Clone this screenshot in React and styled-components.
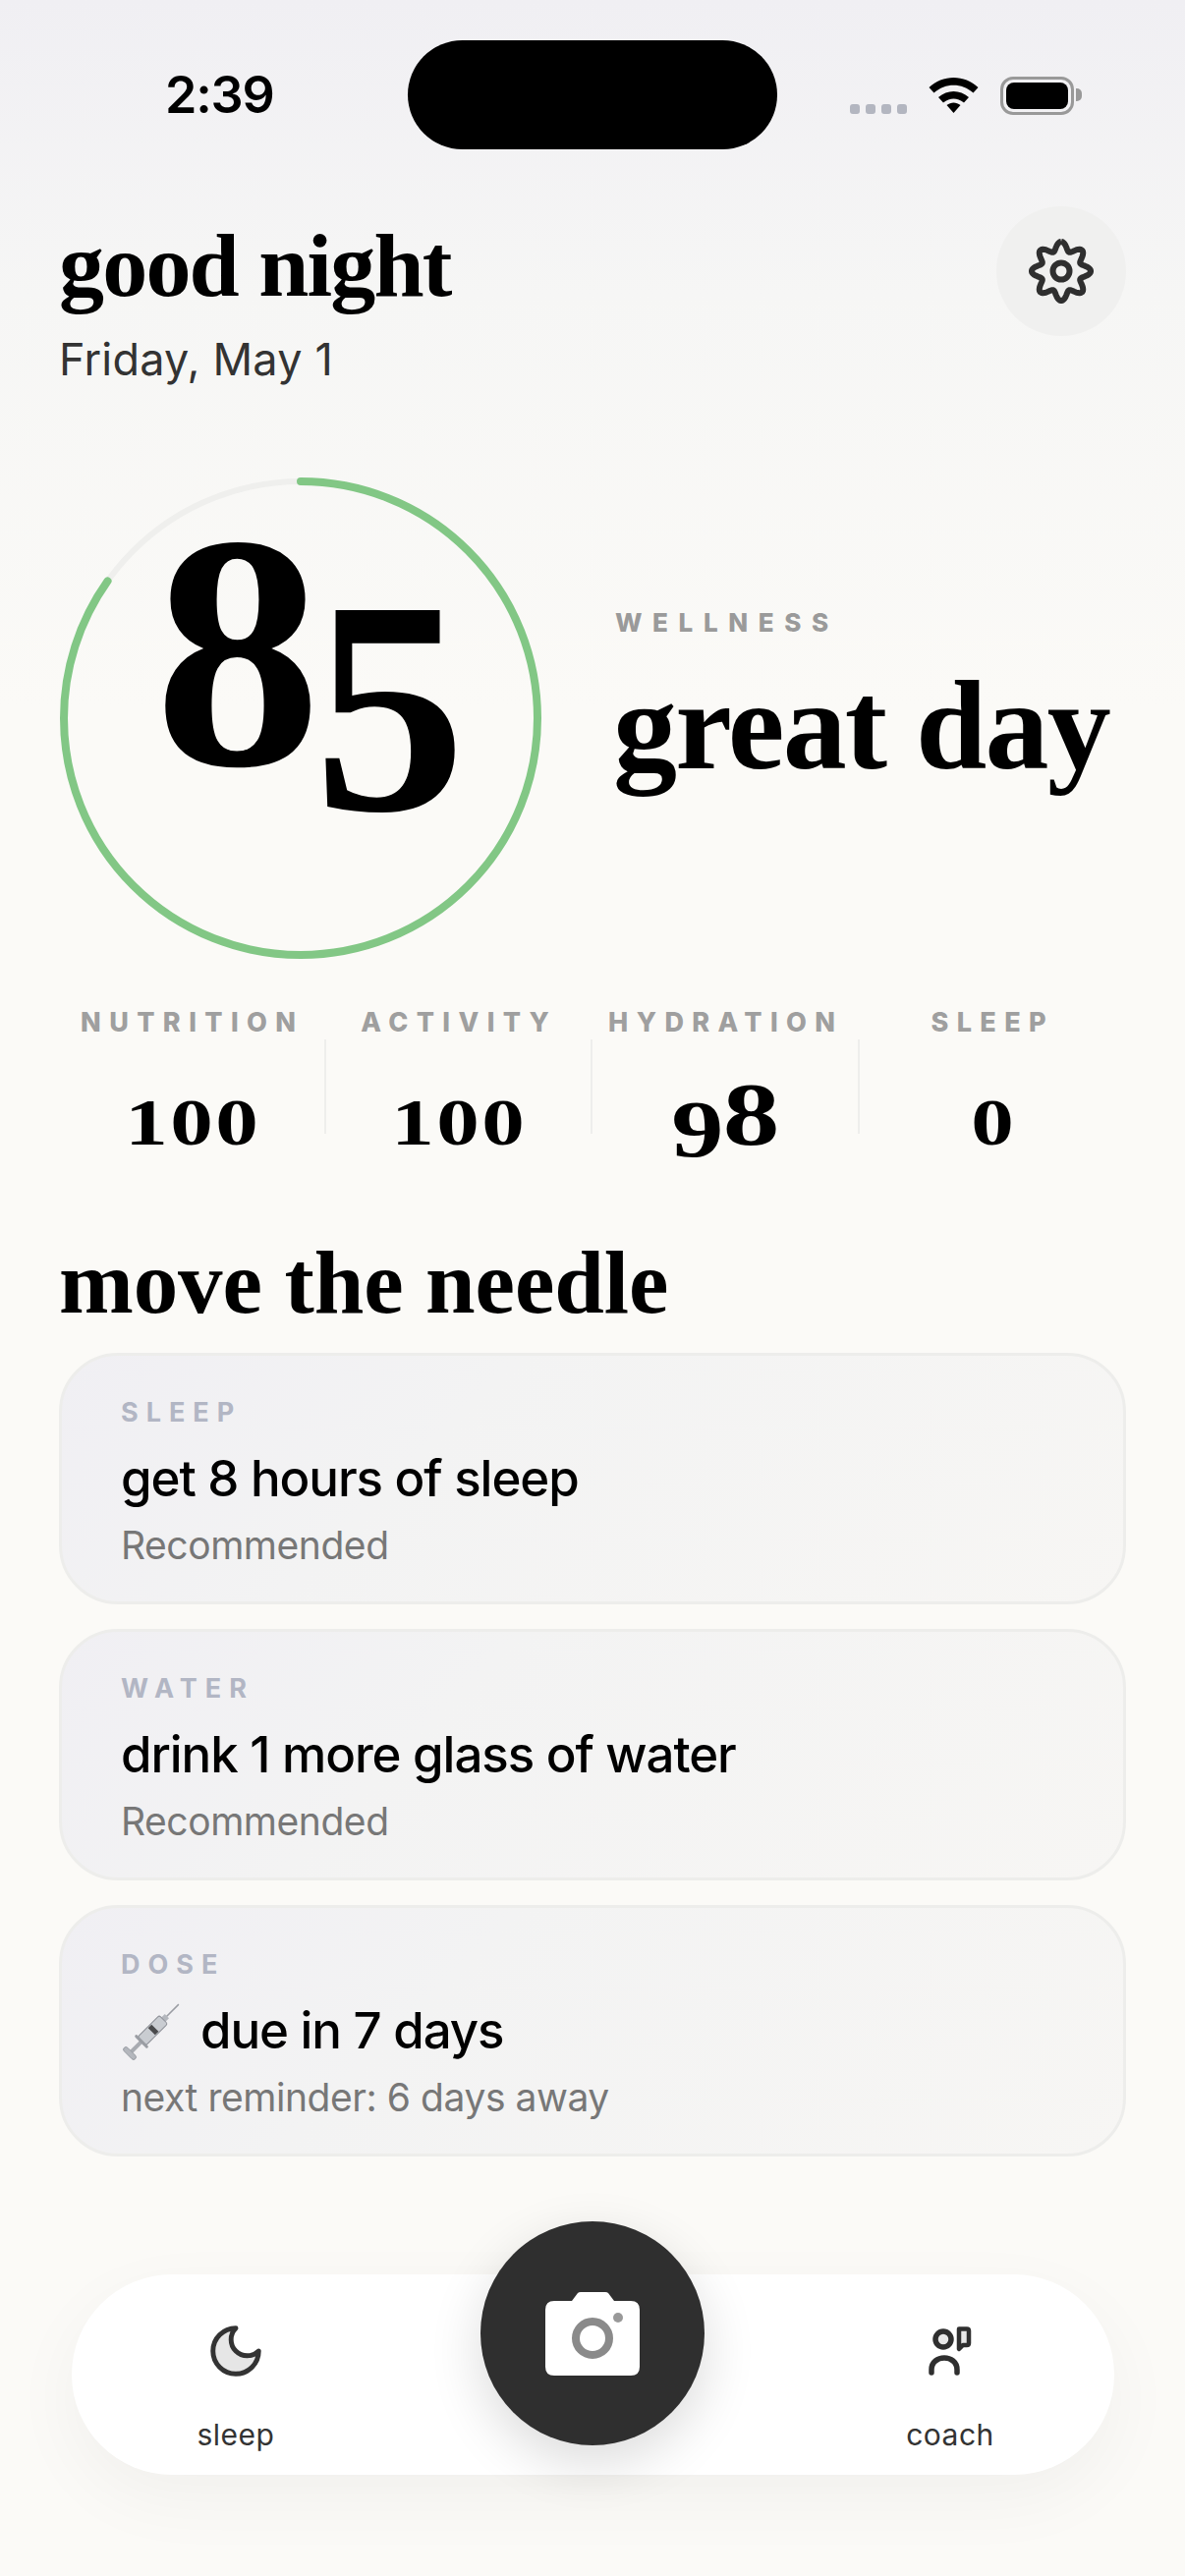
import React from "react";
import styled, { createGlobalStyle } from "styled-components";

const serif = `"Liberation Serif", "Times New Roman", serif`;
const sans = `Inter, "Noto Sans", sans-serif`;

const GlobalStyle = createGlobalStyle`
  html, body { margin: 0; padding: 0; background: #fbfaf7; }
  * { box-sizing: border-box; }
`;

const Page = styled.div`
  width: 1206px;
  height: 2622px;
  overflow: hidden;
  font-family: ${sans};
  color: #000;
  background: linear-gradient(180deg, #f0eff3 0, #f6f6f5 300px, #fbfaf7 720px, #fbfaf7 100%);
`;

const StatusBar = styled.div`
  display: grid;
  grid-template-columns: 415px 376px 1fr;
  padding-top: 41px;
  height: 152px;
`;

const Time = styled.div`
  padding-left: 168px;
  font-size: 52px;
  font-weight: 600;
  line-height: 111px;
  letter-spacing: -1.2px;
`;

const Island = styled.div`
  height: 111px;
  border-radius: 56px;
  background: #000;
`;

const StatusIcons = styled.div`
  display: flex;
  align-items: flex-start;
  padding: 37px 0 0 74px;
`;

const Dots = styled.div`
  display: flex;
  gap: 6px;
  margin-top: 28px;
  margin-right: 22px;
`;

const Dot = styled.span`
  width: 10px;
  height: 10px;
  border-radius: 3px;
  background: #b3b6c0;
`;

const Battery = styled.div`
  position: relative;
  width: 75px;
  height: 39px;
  margin-left: 22px;
  padding: 3px;
  border: 3px solid #999;
  border-radius: 13px;
  &::after {
    content: "";
    position: absolute;
    right: -11px;
    top: 9px;
    width: 6px;
    height: 13px;
    border-radius: 0 5px 5px 0;
    background: #999;
  }
`;

const BatteryFill = styled.div`
  height: 100%;
  border-radius: 8px;
  background: #000;
`;

const Header = styled.header`
  display: flex;
  justify-content: space-between;
  align-items: flex-start;
  padding: 58px 60px 0;
  height: 246px;
`;

const Greeting = styled.h1`
  margin: 10px 0 0;
  font-family: ${serif};
  font-size: 92px;
  font-weight: 700;
  line-height: 100px;
  letter-spacing: -1.8px;
`;

const DateLine = styled.div`
  margin-top: 19px;
  font-size: 45px;
  line-height: 54px;
  color: #333;
  letter-spacing: 0.2px;
`;

const SettingsButton = styled.button`
  display: flex;
  align-items: center;
  justify-content: center;
  width: 132px;
  height: 132px;
  padding: 0;
  border: 0;
  border-radius: 50%;
  background: #f0f0ef;
`;

const Hero = styled.section`
  display: flex;
  align-items: center;
  gap: 75px;
  padding: 0 60px 0 61px;
  margin-top: 88px;
`;

const Ring = styled.div`
  position: relative;
  width: 490px;
  height: 490px;
  flex: none;
`;

const RingSvg = styled.svg`
  display: block;
  width: 490px;
  height: 490px;
`;

const ScoreText = styled.div`
  position: absolute;
  left: 96px;
  top: 0;
  font-family: ${serif};
  font-weight: 700;
  line-height: 356px;
  white-space: nowrap;
`;

const Digit = styled.span`
  font-size: ${(p) => p.$size}px;
  vertical-align: ${(p) => p.$drop || 0}px;
  margin-left: ${(p) => p.$shift || 0}px;
`;

const HeroCopy = styled.div`
  margin-top: -42px;
`;

const Eyebrow = styled.div`
  font-size: 26px;
  font-weight: 800;
  line-height: 32px;
  letter-spacing: 10.6px;
  color: #9a9a9a;
`;

const Verdict = styled.div`
  margin: 23px 0 0 -2px;
  font-family: ${serif};
  font-size: 130px;
  font-weight: 700;
  line-height: 130px;
  letter-spacing: -1.8px;
  white-space: nowrap;
`;

const Stats = styled.section`
  display: grid;
  grid-template-columns: repeat(4, 1fr);
  padding: 0 60px;
  margin-top: 51px;
`;

const Stat = styled.div`
  display: flex;
  flex-direction: column;
  align-items: center;
`;

const StatLabel = styled.div`
  font-size: 27px;
  font-weight: 800;
  line-height: 28px;
  letter-spacing: 8.4px;
  color: #9f9f9f;
  white-space: nowrap;
`;

const StatValue = styled.div`
  width: 100%;
  height: 96px;
  margin-top: 3px;
  text-align: center;
  font-family: ${serif};
  font-weight: 700;
  line-height: 204px;
  white-space: nowrap;
  ${(p) => (p.$divided ? "border-right: 2px solid #eeeeec;" : "")}
`;

// old-style figures: Liberation has none, so digits are sized and dropped one by one
const StatDigit = styled.span`
  display: inline-block;
  margin: 0 6px;
  font-size: ${(p) => p.$size}px;
  line-height: 1;
  vertical-align: ${(p) => p.$drop || 0}px;
  transform: scaleX(1.28);
`;

const SectionTitle = styled.h2`
  margin: 102px 0 0 60px;
  font-family: ${serif};
  font-size: 91px;
  font-weight: 700;
  line-height: 100px;
  letter-spacing: -0.1px;
`;

const Cards = styled.section`
  display: flex;
  flex-direction: column;
  gap: 25px;
  padding: 0 60px;
  margin-top: 21px;
`;

const Card = styled.article`
  height: 256px;
  padding: 42px 60px 0;
  border: 3px solid #ededeb;
  border-radius: 60px;
  background: linear-gradient(135deg, #f0eff3 0%, #f3f3f3 35%, #f7f6f4 100%);
`;

const CardTag = styled.div`
  font-size: 27px;
  font-weight: 700;
  line-height: 32px;
  letter-spacing: 8px;
  color: #b2b6c4;
`;

const CardTitle = styled.div`
  display: flex;
  align-items: center;
  gap: 19px;
  height: 60px;
  margin-top: 21px;
  font-size: 51px;
  font-weight: 500;
  line-height: 60px;
  letter-spacing: -1.05px;
`;

const CardNote = styled.div`
  margin-top: 15px;
  font-size: 39px;
  line-height: 46px;
  letter-spacing: -0.45px;
  color: #777;
`;

const SyringeSvg = styled.svg`
  margin-left: 2px;
`;

const Nav = styled.nav`
  position: relative;
  display: flex;
  justify-content: space-between;
  width: 1061px;
  height: 204px;
  margin: 120px 0 0 73px;
  border-radius: 102px;
  background: #fff;
  box-shadow: 0 24px 72px rgba(0, 0, 0, 0.045);
`;

const NavItem = styled.div`
  display: flex;
  flex-direction: column;
  align-items: center;
  width: 334px;
  padding-top: 50px;
`;

const NavIconSlot = styled.div`
  display: flex;
  align-items: center;
  justify-content: center;
  height: 56px;
`;

const NavLabel = styled.div`
  margin-top: 39px;
  font-size: 30px;
  line-height: 36px;
  letter-spacing: 0.5px;
  color: #333;
`;

const CameraButton = styled.button`
  position: absolute;
  left: 416px;
  top: -54px;
  display: flex;
  align-items: center;
  justify-content: center;
  width: 228px;
  height: 228px;
  padding: 0;
  border: 0;
  border-radius: 50%;
  background: #2f2f2f;
  box-shadow: 0 18px 54px rgba(0, 0, 0, 0.14);
`;

const WifiIcon = () => (
  <svg width="51" height="37" viewBox="0 0 51 37" fill="#000">
    <path d="M0.5 11 C14 -2.5 37 -2.5 50.5 11 L45.5 16.5 C34 6 17 6 5.5 16.5Z" />
    <path d="M10 21 C19 13 32 13 41 21 L36 26.5 C29 21 22 21 15 26.5Z" />
    <path d="M18.5 29 C23 25.5 28 25.5 32.5 29 L25.5 37Z" />
  </svg>
);

// eight soft lobes round the centre
const gearPath = Array.from({ length: 145 }, (_, i) => {
  const a = (i / 144) * 2 * Math.PI;
  const r = 25.5 + 4.6 * Math.cos(8 * a);
  return `${i ? "L" : "M"}${(33 + r * Math.sin(a)).toFixed(2)} ${(33 - r * Math.cos(a)).toFixed(2)}`;
}).join(" ");

const GearIcon = () => (
  <svg width="66" height="66" viewBox="0 0 66 66" fill="none" stroke="#2f2f2f" strokeWidth="6">
    <path d={gearPath} strokeLinejoin="round" />
    <circle cx="33" cy="33" r="8.5" />
  </svg>
);

const SyringeIcon = () => (
  <SyringeSvg width="60" height="60" viewBox="0 0 60 60">
    <g transform="rotate(45 30 30)">
      <path d="M30 -8 V12" stroke="#9a9da3" strokeWidth="1.5" />
      <rect x="27" y="9" width="6" height="6" fill="#b4b7bd" />
      <rect x="24" y="14" width="12" height="31" rx="2" fill="#c9ccd1" stroke="#8f9299" strokeWidth="1" />
      <rect x="25" y="26" width="10" height="5" fill="#4a4a4c" />
      <rect x="28" y="45" width="4" height="15" fill="#a9acb2" />
      <rect x="21" y="44" width="18" height="3" rx="1.5" fill="#9a9da3" />
      <rect x="22" y="60" width="16" height="5" rx="2.5" fill="#b4b7bd" stroke="#8f9299" strokeWidth="0.8" />
    </g>
  </SyringeSvg>
);

const CameraIcon = () => (
  <svg width="96" height="85" viewBox="0 0 96 85">
    <path
      d="M9 9 H27 L33 1 Q34 0 36 0 H61 Q63 0 64 1 L70 9 H87 Q96 9 96 18 V76 Q96 85 87 85 H9 Q0 85 0 76 V18 Q0 9 9 9Z"
      fill="#fff"
    />
    <circle cx="48" cy="47" r="17" fill="none" stroke="#8a8a8a" strokeWidth="8" />
    <circle cx="74" cy="26" r="5" fill="#999" />
  </svg>
);

const MoonIcon = () => (
  <svg width="62" height="62" viewBox="0 0 24 24" fill="#e6e6e6" stroke="#333" strokeWidth="1.9" strokeLinejoin="round">
    <path d="M12 3a6 6 0 0 0 9 9 9 9 0 1 1-9-9Z" />
  </svg>
);

const CoachIcon = () => (
  <svg width="44" height="50" viewBox="0 0 44 50" fill="none" stroke="#2f2f2f" strokeWidth="5.5" strokeLinecap="round">
    <circle cx="15" cy="13" r="8" fill="#e8e8e8" />
    <path d="M31 2.5 H39 Q41 2.5 41 4.5 V17 Q41 19 39 19 H35 L31 23Z" fill="#e8e8e8" strokeWidth="4.5" strokeLinejoin="round" />
    <path d="M3 47 V44 C3 28 29 28 29 44 V47" />
  </svg>
);

const stats = [
  { label: "NUTRITION", digits: [["1", 68], ["0", 68], ["0", 68]] },
  { label: "ACTIVITY", digits: [["1", 68], ["0", 68], ["0", 68]] },
  { label: "HYDRATION", digits: [["9", 83, -12], ["8", 90]] },
  { label: "SLEEP", digits: [["0", 68]] },
];

const actions = [
  { tag: "SLEEP", title: "get 8 hours of sleep", note: "Recommended" },
  { tag: "WATER", title: "drink 1 more glass of water", note: "Recommended" },
  { tag: "DOSE", title: "due in 7 days", note: "next reminder: 6 days away", syringe: true },
];

const R = 241;
const C = 2 * Math.PI * R;

export default function App() {
  return (
    <Page>
      <GlobalStyle />
      <StatusBar>
        <Time>2:39</Time>
        <Island />
        <StatusIcons>
          <Dots>
            <Dot />
            <Dot />
            <Dot />
            <Dot />
          </Dots>
          <WifiIcon />
          <Battery>
            <BatteryFill />
          </Battery>
        </StatusIcons>
      </StatusBar>

      <Header>
        <div>
          <Greeting>good night</Greeting>
          <DateLine>Friday, May 1</DateLine>
        </div>
        <SettingsButton aria-label="settings">
          <GearIcon />
        </SettingsButton>
      </Header>

      <Hero>
        <Ring>
          <RingSvg viewBox="0 0 490 490">
            <circle cx="245" cy="245" r={R} fill="none" stroke="#efefed" strokeWidth="6" />
            <circle
              cx="245"
              cy="245"
              r={R}
              fill="none"
              stroke="#82c785"
              strokeWidth="8"
              strokeLinecap="round"
              strokeDasharray={`${C * 0.848} ${C}`}
              transform="rotate(-90 245 245)"
            />
          </RingSvg>
          <ScoreText>
            <Digit $size={340}>8</Digit>
            <Digit $size={310} $drop={-46} $shift={-8}>5</Digit>
          </ScoreText>
        </Ring>
        <HeroCopy>
          <Eyebrow>WELLNESS</Eyebrow>
          <Verdict>great day</Verdict>
        </HeroCopy>
      </Hero>

      <Stats>
        {stats.map((s, i) => (
          <Stat key={s.label}>
            <StatLabel>{s.label}</StatLabel>
            <StatValue $divided={i < 3}>
              {s.digits.map(([d, size, drop], j) => (
                <StatDigit key={j} $size={size} $drop={drop}>{d}</StatDigit>
              ))}
            </StatValue>
          </Stat>
        ))}
      </Stats>

      <SectionTitle>move the needle</SectionTitle>

      <Cards>
        {actions.map((a) => (
          <Card key={a.tag}>
            <CardTag>{a.tag}</CardTag>
            <CardTitle>
              {a.syringe && <SyringeIcon />}
              {a.title}
            </CardTitle>
            <CardNote>{a.note}</CardNote>
          </Card>
        ))}
      </Cards>

      <Nav>
        <NavItem>
          <NavIconSlot>
            <MoonIcon />
          </NavIconSlot>
          <NavLabel>sleep</NavLabel>
        </NavItem>
        <CameraButton aria-label="camera">
          <CameraIcon />
        </CameraButton>
        <NavItem>
          <NavIconSlot>
            <CoachIcon />
          </NavIconSlot>
          <NavLabel>coach</NavLabel>
        </NavItem>
      </Nav>
    </Page>
  );
}
